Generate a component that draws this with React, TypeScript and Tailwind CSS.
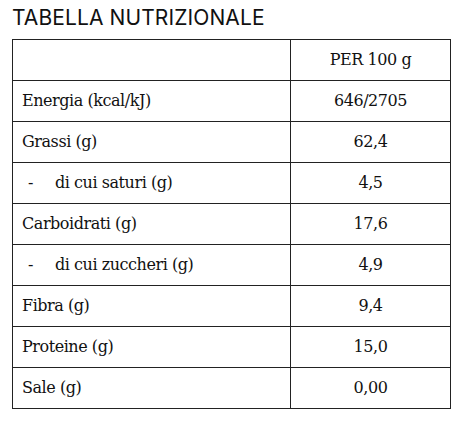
import React from 'react';

type Row = { label: string; value: string; sub?: boolean };

const rows: Row[] = [
  { label: 'Energia (kcal/kJ)', value: '646/2705' },
  { label: 'Grassi (g)', value: '62,4' },
  { label: 'di cui saturi (g)', value: '4,5', sub: true },
  { label: 'Carboidrati (g)', value: '17,6' },
  { label: 'di cui zuccheri (g)', value: '4,9', sub: true },
  { label: 'Fibra (g)', value: '9,4' },
  { label: 'Proteine (g)', value: '15,0' },
  { label: 'Sale (g)', value: '0,00' },
];

const App: React.FC = () => {
  return (
    <div className="w-[465px] h-[425px] bg-white px-[12px] pt-[5px] text-[#111]">
      <h2 className="font-['Inter',sans-serif] text-[21px] leading-[26px] font-normal tracking-[0.1px]">
        TABELLA NUTRIZIONALE
      </h2>
      <table className="mt-[8px] w-[439px] border-collapse font-['DejaVu_Serif',serif] text-[16px] tracking-[-0.45px]">
        <thead>
          <tr>
            <th className="h-[41px] w-[278px] border border-[#222] p-0"></th>
            <th className="h-[41px] border border-[#222] p-0 font-normal text-center">PER 100 g</th>
          </tr>
        </thead>
        <tbody>
          {rows.map((row) => (
            <tr key={row.label}>
              <td className="h-[41px] border border-[#222] px-[9px] py-0">
                {row.sub ? (
                  <span className="flex items-center">
                    <span className="w-[33px] pl-[6px]">-</span>
                    <span>{row.label}</span>
                  </span>
                ) : (
                  row.label
                )}
              </td>
              <td className="h-[41px] border border-[#222] p-0 text-center">{row.value}</td>
            </tr>
          ))}
        </tbody>
      </table>
    </div>
  );
};

export default App;
